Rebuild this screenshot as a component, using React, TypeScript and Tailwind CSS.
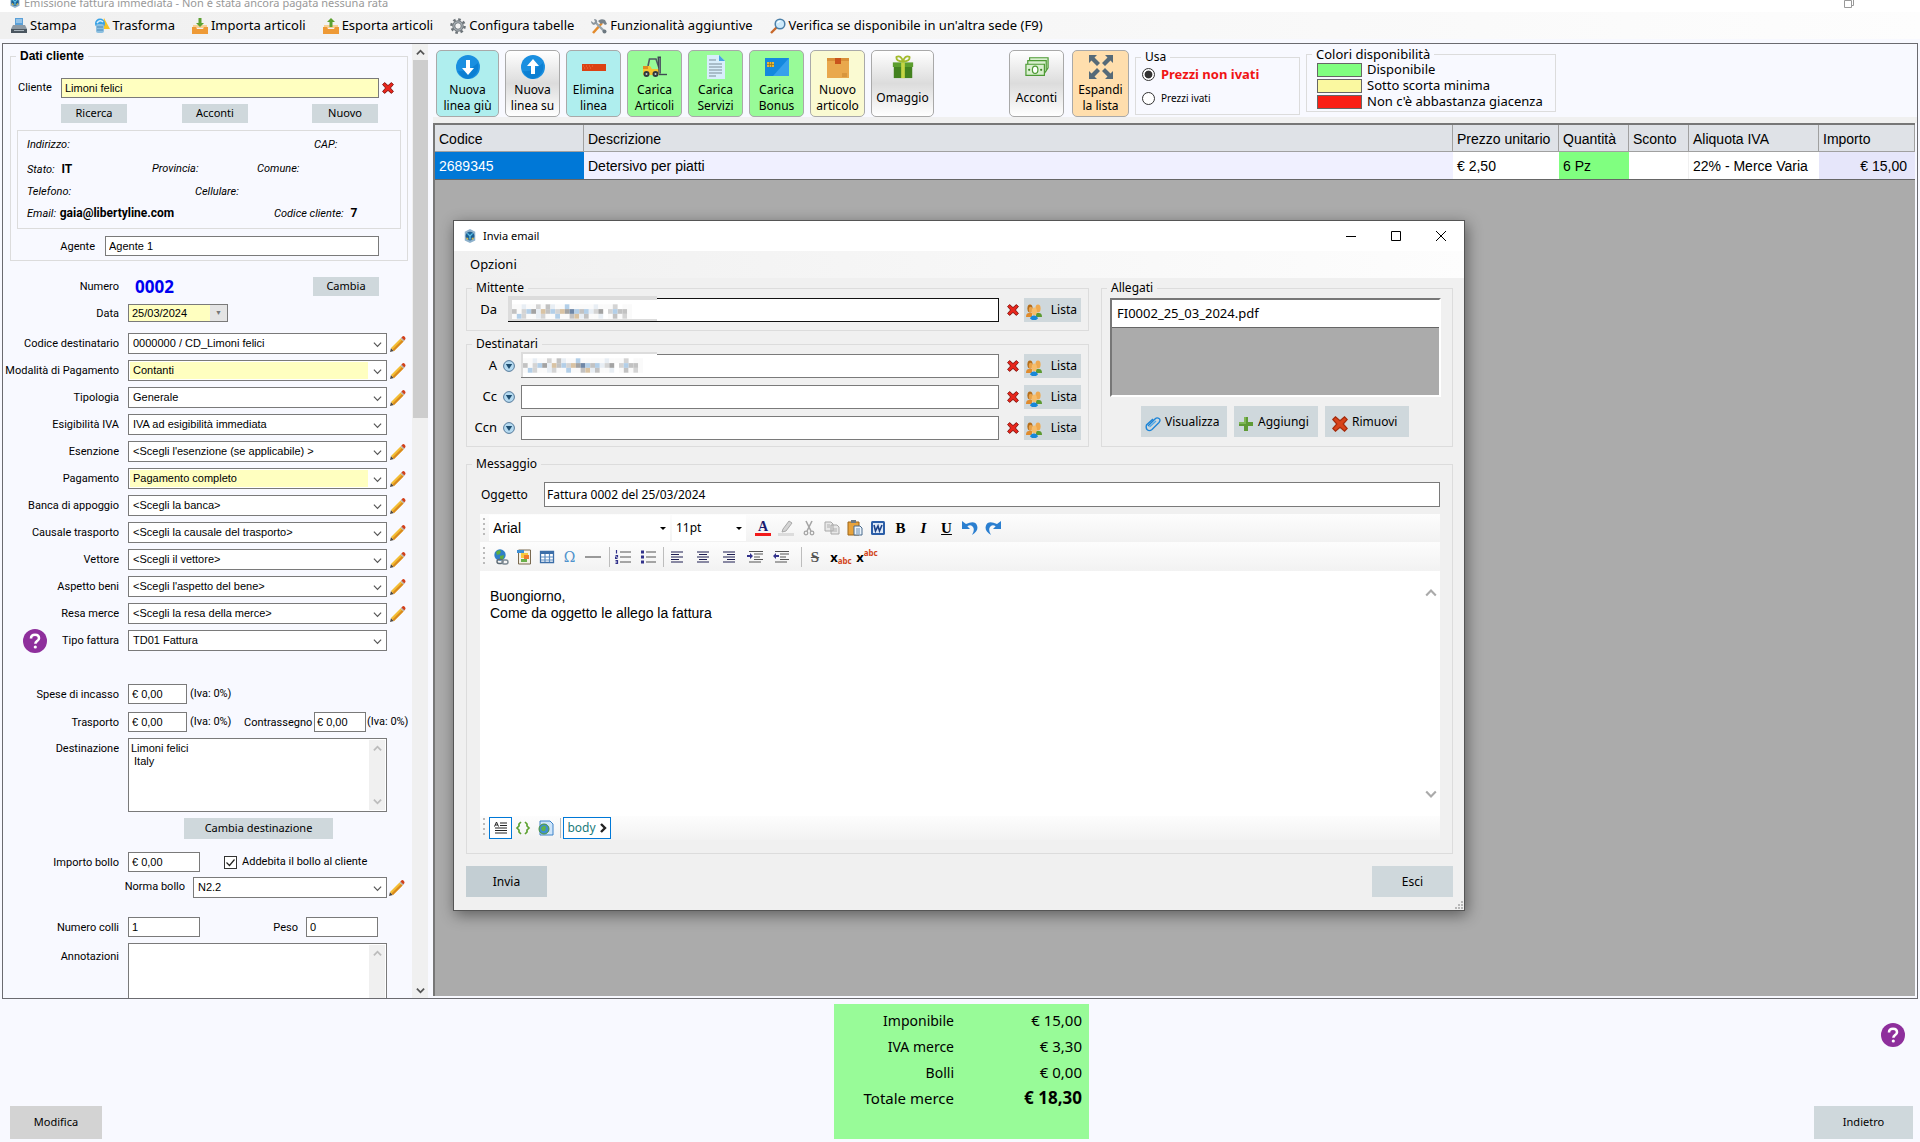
import { useState } from 'react';
import type { ReactNode } from 'react';

type IconProps = { className?: string };

const CAMPO = 'border border-[#7a7a7a] bg-white px-[3px] outline-none';
const TESTO_CAMPO = "font-['Liberation_Sans',sans-serif] text-[11px]";
const BOTTONE = "bg-[#cfd8dc] text-black font-['Noto_Sans',sans-serif]";

/* ---------- icone ---------- */

function IconaLogo({ className = 'w-4 h-4' }: IconProps) {
    return (
        <svg viewBox="0 0 16 16" className={className}>
            <path d="M8 0l6 3v10l-6 3-6-3V3z" fill="#8fb2cc" />
            <circle cx="8" cy="8" r="5" fill="#1d5f93" />
            <path d="M5 5l3 3 3-3M8 8v4" stroke="#5cc3e8" strokeWidth="1.5" fill="none" />
            <path d="M4 10l2 2M12 10l-2 2" stroke="#d8b94a" strokeWidth="1.5" />
        </svg>
    );
}

function IconaX({ className = 'w-3 h-3', colore = '#e8261c', bordo = '#7d100a' }: IconProps & { colore?: string; bordo?: string }) {
    return (
        <svg viewBox="0 0 12 12" className={className}>
            <path d="M.6 2.6 2.6.6 6 3.6 9.4.6l2 2L8.4 6l3 3.4-2 2L6 8.4l-3.4 3-2-2L3.6 6z" fill={colore} stroke={bordo} strokeWidth=".9" />
        </svg>
    );
}

function IconaMatita() {
    return (
        <svg viewBox="0 0 16 16" className="w-4 h-4 shrink-0">
            <path d="M0 16l1-4 3 3z" fill="#4f4a46" />
            <path d="M1 12 10.5 2.5l3 3L4 15z" fill="#f3bd33" />
            <path d="M2.5 13.5 12 4l1.5 1.5L4 15z" fill="#d98a1e" />
            <path d="m10.5 2.5 1.5-1.5 3 3-1.5 1.5z" fill="#b9b2a8" />
            <path d="m11.5 1.5 1.2-1.2q1-.6 2 .4t.8 2.4L14.3 4.3z" fill="#d2401a" />
        </svg>
    );
}

function IconaAiuto() {
    return (
        <svg viewBox="0 0 24 24" className="w-6 h-6">
            <circle cx="12" cy="12" r="12" fill="#8e2f9c" />
            <path d="M8 9.5Q8 5.8 12 5.8t4 3.5q0 1.7-2 2.9-1.6 1-1.6 2.6" stroke="#fff" strokeWidth="2.6" fill="none" />
            <circle cx="12.3" cy="18" r="1.6" fill="#fff" />
        </svg>
    );
}

function Freccia({ su = false, className = 'w-[9px] h-[9px] text-[#555]', spessore = 1.3 }: IconProps & { su?: boolean; spessore?: number }) {
    return (
        <svg viewBox="0 0 10 10" className={className}>
            <path d={su ? 'M1 7l4-4 4 4' : 'M1 3l4 4 4-4'} stroke="currentColor" strokeWidth={spessore} fill="none" />
        </svg>
    );
}

function IconaPersone() {
    return (
        <svg viewBox="0 0 16 16" className="mt-1 w-4 h-4 shrink-0">
            <path d="M0 13q0-4 3-4h3v4z" fill="#e08b2c" />
            <path d="M10 13h6q0-4-3-4h-3z" fill="#5c9a31" />
            <ellipse cx="4" cy="4.5" rx="2.6" ry="4" fill="#b66d18" />
            <ellipse cx="4.6" cy="5.8" rx="1.8" ry="3" fill="#e9a24a" />
            <ellipse cx="12" cy="4.5" rx="2.6" ry="4" fill="#efa94f" />
            <ellipse cx="8.3" cy="7.5" rx="2.6" ry="4" fill="#f6bd6c" />
            <path d="M4 14.5q1-3 4-3t4 3l-2 1.500H6z" fill="#1787d8" />
        </svg>
    );
}

function IconaStampante() {
    return (
        <svg viewBox="0 0 16 16" className="w-4 h-4">
            <path d="M4 0h8v7H4z" fill="#5aa0d8" />
            <path d="M5 2h6M5 4h6" stroke="#cfe5f5" />
            <path d="M2 7h12l2 4H0z" fill="#8d99a3" />
            <path d="M0 11h16v4H0z" fill="#4b565f" />
            <path d="M3 12.5h10" stroke="#a9b4bc" />
        </svg>
    );
}

function IconaTrasforma() {
    return (
        <svg viewBox="0 0 16 16" className="w-4 h-4">
            <path d="M10 0l6 11H8z" fill="#f7c325" />
            <circle cx="6" cy="5.5" r="5" fill="#3aa3e6" />
            <path d="M3 5q3-4 6-1" stroke="#d6f0ff" strokeWidth="1.5" fill="none" />
            <rect x="2" y="6" width="8" height="9" rx="2" fill="#8bbfe0" />
            <path d="M3 9h6M3 12h6" stroke="#4b88b8" />
        </svg>
    );
}

function IconaCassetto({ su = false }: { su?: boolean }) {
    return (
        <svg viewBox="0 0 16 16" className="w-4 h-4">
            <path d="M1 7h14v3H1z" fill="#f7cf95" />
            <path d="M0 9h4l1 2h6l1-2h4v7H0z" fill="#ee9a36" />
            <path d={su ? 'M8 0l4 4H9.5v5h-3V4H4z' : 'M8 9L4 5h2.5V0h3v5H12z'} fill="#5da130" />
        </svg>
    );
}

function IconaIngranaggio() {
    return (
        <svg viewBox="0 0 16 16" className="w-4 h-4">
            <circle cx="8" cy="8" r="6.6" fill="none" stroke="#6b7277" strokeWidth="2.4" strokeDasharray="2.6 2.58" />
            <circle cx="8" cy="8" r="4.2" fill="none" stroke="#6b7277" strokeWidth="3" />
            <circle cx="8" cy="8" r="4.2" fill="none" stroke="#a8b0b5" strokeWidth="1.2" />
        </svg>
    );
}

function IconaAttrezzi() {
    return (
        <svg viewBox="0 0 16 16" className="w-4 h-4">
            <path d="M2 15 11 5" stroke="#e38b2c" strokeWidth="2.6" />
            <path d="M7 3q3-3 7-1l2 4-2 1-2-2-2 1z" fill="#77828a" />
            <path d="M4 4l10 10" stroke="#9aa5ad" strokeWidth="2.4" />
            <path d="M0 3l3 2 1-1L3 1q4 0 3 4L3 7Q0 6 0 3z" fill="#8a959d" />
            <circle cx="13.5" cy="13.5" r="2" fill="#6d7880" />
        </svg>
    );
}

function IconaLente() {
    return (
        <svg viewBox="0 0 16 16" className="w-4 h-4">
            <path d="M1 15l6-6" stroke="#c8682a" strokeWidth="2.4" />
            <circle cx="10" cy="6" r="4.8" fill="#cdeafb" stroke="#4b7fa8" strokeWidth="1.5" />
            <path d="M7.5 5q1-2 3-2" stroke="#fff" strokeWidth="1.2" fill="none" />
        </svg>
    );
}

function IconaCerchioFreccia({ su = false }: { su?: boolean }) {
    return (
        <svg viewBox="0 0 24 24" className="w-6 h-6">
            <circle cx="12" cy="12" r="12" fill="#1a8fe0" />
            <path d="M2 16Q10 18 22 8q2 12-10 16Q5 23 2 16z" fill="#0c7fd2" />
            <path d={su ? 'M12 4l6 7h-4v8h-4v-8H6z' : 'M12 20l-6-7h4V5h4v8h4z'} fill="#fff" />
        </svg>
    );
}

function IconaMeno() {
    return (
        <svg viewBox="0 0 24 24" className="w-6 h-6">
            <path d="M0 9h24v7H0z" fill="#dc4214" />
            <path d="M1 11h11M2 13h7" stroke="#ef7040" strokeDasharray="1 2" />
        </svg>
    );
}

function IconaMuletto() {
    return (
        <svg viewBox="0 0 24 24" className="w-6 h-6">
            <path d="M5 11 6.500 4H13l3 9" stroke="#4e5a62" strokeWidth="1.6" fill="none" />
            <path d="M0 11h7l2 3h7v6H0z" fill="#f6c531" />
            <path d="M0 11h5v3H0z" fill="#e08d1e" />
            <path d="M14.500 1.500H18v17h-2.500z" fill="#3f4a52" />
            <path d="M16.800 3v15" stroke="#8e9aa2" strokeWidth=".8" />
            <path d="M16 19.500h8" stroke="#3f4a52" strokeWidth="1.4" />
            <circle cx="3.5" cy="19" r="3" fill="#30383e" />
            <circle cx="12.5" cy="19" r="3" fill="#30383e" />
            <circle cx="3.5" cy="19" r="1" fill="#c4cdd3" />
            <circle cx="12.5" cy="19" r="1" fill="#c4cdd3" />
        </svg>
    );
}

function IconaDocumento() {
    return (
        <svg viewBox="0 0 24 24" className="w-6 h-6">
            <path d="M3 0h12l6 6v18H3z" fill="#d8eefb" />
            <path d="M15 0l6 6h-6z" fill="#4ba3e0" />
            <path d="M5 5h7M5 9h13M5 12h13M5 15h13M5 18h13M5 21h7" stroke="#7b8b97" strokeWidth="1.2" />
        </svg>
    );
}

function IconaCarta() {
    return (
        <svg viewBox="0 0 24 24" className="w-6 h-6">
            <path d="M0 3h24v18H0z" fill="#1488de" />
            <path d="M24 3v18H8z" fill="#37a0ec" />
            <path d="M2 7h7v5H2z" fill="#e3b63a" />
            <path d="M4.5 7v5M6.5 7v5M2 9.5h7" stroke="#94731b" strokeWidth=".7" />
        </svg>
    );
}

function IconaScatola() {
    return (
        <svg viewBox="0 0 24 24" className="w-6 h-6">
            <path d="M1 3h22v20H1z" fill="#e9a84c" />
            <path d="M1 3h22v3H1z" fill="#d99038" />
            <path d="M9 3h6v6H9z" fill="#c9531c" />
            <path d="M16 19h5M16 21h5" stroke="#bd7b28" strokeWidth=".8" />
        </svg>
    );
}

function IconaRegalo() {
    return (
        <svg viewBox="0 0 24 26" className="w-6 h-6">
            <path d="M12 7Q4 7 5 2q5-2 7 5 2-7 7-5 1 5-7 5z" fill="none" stroke="#a3bb2c" strokeWidth="2" />
            <path d="M1 8h22v5H1z" fill="#5c9e2e" />
            <path d="M2 13h20v12H2z" fill="#43821f" />
            <path d="M10 8h4v17h-4z" fill="#c4d544" />
        </svg>
    );
}

function IconaSoldi() {
    return (
        <svg viewBox="0 0 26 24" className="w-6 h-6">
            <g fill="#d9efcf" stroke="#4d9a34" strokeWidth="1.3">
                <path d="M5 2h20v11l-2 3H5z" />
                <path d="M3 5h20v11l-2 3H3z" />
                <path d="M1 9h20v12H1z" />
                <ellipse cx="11" cy="15" rx="3" ry="4" fill="#fff" />
            </g>
            <circle cx="4.5" cy="15" r="1.2" fill="#3f8628" />
            <circle cx="17.5" cy="15" r="1.2" fill="#3f8628" />
        </svg>
    );
}

function IconaEspandi() {
    return (
        <svg viewBox="0 0 24 24" className="w-6 h-6">
            <g fill="#566a78">
                <path d="M0 0h8L5.5 2.5 11 8l-3 3-5.5-5.500L0 8z" />
                <path d="M24 0v8l-2.5-2.500L16 11l-3-3 5.500-5.500L16 0z" />
                <path d="M0 24v-8l2.500 2.500L8 13l3 3-5.500 5.500L8 24z" />
                <path d="M24 24h-8l2.500-2.500L13 16l3-3 5.500 5.500L24 16z" />
            </g>
        </svg>
    );
}

function IconaGraffetta() {
    return (
        <svg viewBox="0 0 16 16" className="mt-1 w-4 h-4 shrink-0">
            <path d="M3 10l7-7q2-2 4-.5t0 4L7 13.5q-2.500 2-4.500.5T1.500 9L8 3" stroke="#1d84d6" strokeWidth="1.4" fill="none" />
            <path d="M4.5 11 11 5" stroke="#4aa8ea" strokeWidth="1.2" />
        </svg>
    );
}

function IconaPiu() {
    return (
        <svg viewBox="0 0 16 16" className="mt-1 w-4 h-4 shrink-0">
            <path d="M6 1h4v5h5v4h-5v5H6v-5H1V6h5z" fill="#5f9a34" />
            <path d="M6 1h2v7H1V6h5z" fill="#7fb755" />
        </svg>
    );
}

function IconaTendina() {
    return (
        <svg viewBox="0 0 12 12" className="w-3 h-3">
            <circle cx="6" cy="6" r="5.4" fill="#b5daf0" stroke="#54799a" />
            <path d="M2.8 4h6.4L6 9z" fill="#1f4e70" />
        </svg>
    );
}

function SvgBarra({ children }: { children: ReactNode }) {
    return <svg viewBox="0 0 16 16" className="w-4 h-4">{children}</svg>;
}

const righe = (d: string, colore = '#1c1c50') => <path d={d} stroke={colore} strokeWidth="1.2" fill="none" />;

const ICONE_TESTO: { nome: string; icona: ReactNode }[] = [
    { nome: 'Colore testo', icona: <SvgBarra><text x="8" y="11" textAnchor="middle" fontSize="14" fontWeight="700" fontFamily="Liberation Serif" fill="#1c1c70">A</text><path d="M0 13h16v3H0z" fill="#f21a1a" /></SvgBarra> },
    { nome: 'Evidenziatore', icona: <SvgBarra><path d="M5 9l6-8 3 2-6 8-4 1z" fill="#d4d4d4" stroke="#a8a8a8" /><path d="M0 13h16v3H0z" fill="#dcdcdc" /></SvgBarra> },
    { nome: 'Taglia', icona: <SvgBarra><path d="M5 1l5 10M11 1L6 11" stroke="#a5a5a5" strokeWidth="1.6" /><circle cx="5" cy="13" r="1.8" fill="none" stroke="#a5a5a5" strokeWidth="1.3" /><circle cx="11" cy="13" r="1.8" fill="none" stroke="#a5a5a5" strokeWidth="1.3" /></SvgBarra> },
    { nome: 'Copia', icona: <SvgBarra><path d="M1 2h6l2 2v7H1zM7 5h6l2 2v7H7z" fill="#e8e8e8" stroke="#a8a8a8" />{righe('M3 5h3M3 7h3M9 9h4M9 11h4', '#b0b0b0')}</SvgBarra> },
    { nome: 'Incolla', icona: <SvgBarra><path d="M1 2h11v13H1z" fill="#e8a33c" stroke="#9c6517" /><path d="M4 0h5v3H4z" fill="#6f7a82" /><path d="M7 6h6l2 2v7H7z" fill="#eaf3fb" stroke="#4a6a8c" />{righe('M9 9h4M9 11h4M9 13h4', '#6d8fb3')}</SvgBarra> },
    { nome: 'Incolla da Word', icona: <SvgBarra><rect x="1" y="1" width="14" height="14" rx="1.5" fill="#2b5ea8" /><path d="M3 3h10v10H3z" fill="#dfeaf8" /><path d="M4 5l1.500 6L8 6l1.500 5L12 5" stroke="#1c4288" strokeWidth="1.6" fill="none" /></SvgBarra> },
    { nome: 'Grassetto', icona: <span className="font-['Liberation_Serif',serif] text-[15px] leading-4 font-bold">B</span> },
    { nome: 'Corsivo', icona: <span className="font-['Liberation_Serif',serif] text-[15px] leading-4 font-bold italic">I</span> },
    { nome: 'Sottolineato', icona: <span className="font-['Liberation_Serif',serif] text-[15px] leading-4 font-bold underline">U</span> },
    { nome: 'Annulla', icona: <SvgBarra><path d="M0 1v8h8L5.3 6.3Q9 4 11 7t-1 8q7-4 5-9.500T4 4z" fill="#2b7fd0" /></SvgBarra> },
    { nome: 'Ripristina', icona: <SvgBarra><path d="M16 1v8H8l2.700-2.700Q7 4 5 7t1 8q-7-4-5-9.500T12 4z" fill="#2b7fd0" /></SvgBarra> },
];

const ICONE_INSERISCI: { nome: string; icona: ReactNode }[] = [
    { nome: 'Collegamento', icona: <SvgBarra><circle cx="7" cy="6" r="5.7" fill="#2f7fc8" /><path d="M3 3q3-3 5-1l-1 3-3 1zM7 7l4-1-1 5H7z" fill="#5fae3f" /><rect x="4" y="10.5" width="6" height="4" rx="2" fill="none" stroke="#5d6a74" strokeWidth="1.4" /><rect x="9" y="11" width="6" height="4" rx="2" fill="none" stroke="#7c8992" strokeWidth="1.4" /></SvgBarra> },
    { nome: 'Immagine', icona: <SvgBarra><path d="M2.5 1h12v14h-12z" fill="#f4f0e4" stroke="#7a6a50" /><path d="M5 4h7v5H5z" fill="#f7c93e" /><path d="M8 6h5v4H8z" fill="#ef7b2d" /><path d="M5 10h6v3H5z" fill="#6ab04a" /><path d="M1 1h7v3H1z" fill="#3e8fd4" /></SvgBarra> },
    { nome: 'Tabella', icona: <SvgBarra><path d="M1.5 2.5h13v11h-13z" fill="#fff" stroke="#3b6ea8" strokeWidth="1.3" /><path d="M1 2h14v3H1z" fill="#3b6ea8" />{righe('M6 5v8M10.5 5v8M2 8h12M2 11h12', '#5a8cc2')}</SvgBarra> },
    { nome: 'Simbolo', icona: <span className="font-['DejaVu_Serif',serif] text-[14px] leading-4 text-[#4f92cc]">Ω</span> },
    { nome: 'Linea orizzontale', icona: <SvgBarra>{righe('M0 8h16', '#5a5a5a')}</SvgBarra> },
];

const ICONE_ELENCHI: { nome: string; icona: ReactNode }[] = [
    { nome: 'Elenco numerato', icona: <SvgBarra>{righe('M5 3h11M5 8h11M5 13h11', '#555')}{righe('M1.5 1v3.5M.5 6.500h2v1.500h-2v1.500h2M.5 11.500h2v3h-2M.5 13h2', '#33338c')}</SvgBarra> },
    { nome: 'Elenco puntato', icona: <SvgBarra>{righe('M6 3h10M6 8h10M6 13h10', '#555')}<path d="M1 1.500h3v3H1zM1 6.500h3v3H1zM1 11.500h3v3H1z" fill="#33338c" /></SvgBarra> },
];

const ICONE_PARAGRAFO: { nome: string; icona: ReactNode }[] = [
    { nome: 'Allinea a sinistra', icona: <SvgBarra>{righe('M2 3h12M2 5.500h8M2 8h12M2 10.500h8M2 13h12')}</SvgBarra> },
    { nome: 'Centra', icona: <SvgBarra>{righe('M2 3h12M4 5.500h8M2 8h12M4 10.500h8M2 13h12')}</SvgBarra> },
    { nome: 'Allinea a destra', icona: <SvgBarra>{righe('M2 3h12M6 5.500h8M2 8h12M6 10.500h8M2 13h12')}</SvgBarra> },
    { nome: 'Aumenta rientro', icona: <SvgBarra>{righe('M2 2.500h14M7 5h9M7 8h6M7 10.500h9M2 13h12', '#555')}<path d="M0 6h3V4l3 3-3 3V8H0z" fill="#33338c" /></SvgBarra> },
    { nome: 'Riduci rientro', icona: <SvgBarra>{righe('M2 2.500h14M7 5h9M7 8h6M7 10.500h9M2 13h12', '#555')}<path d="M6 6H3V4L0 7l3 3V8h3z" fill="#33338c" /></SvgBarra> },
];

const ICONE_CARATTERE: { nome: string; icona: ReactNode }[] = [
    { nome: 'Barrato', icona: <span className="font-['Liberation_Serif',serif] text-[15px] leading-4 font-bold line-through text-[#555]">S</span> },
    { nome: 'Pedice', icona: <span className="flex items-end leading-none font-bold"><span className="text-[13px] leading-4">x</span><span className="text-[8px] text-[#d2441a]">abc</span></span> },
    { nome: 'Apice', icona: <span className="flex items-start leading-none font-bold"><span className="text-[13px] leading-4">x</span><span className="text-[8px] text-[#d2441a]">abc</span></span> },
];

/* ---------- controlli ---------- */

function Gruppo({ titolo, className = '', titoloClass = '', children }: { titolo: string; className?: string; titoloClass?: string; children: ReactNode }) {
    return (
        <fieldset className={`min-w-0 border border-[#dcdcdc] ${className}`}>
            <legend className={`ml-[5px] px-1 leading-4 ${titoloClass}`}>{titolo}</legend>
            {children}
        </fieldset>
    );
}

function Tendina({ id, valore, giallo = false, className = '' }: { id: string; valore: string; giallo?: boolean; className?: string }) {
    return (
        <div className={`relative h-[21px] border border-[#7a7a7a] bg-white p-px ${className}`}>
            <select id={id} defaultValue={valore}
                className={`block h-full appearance-none pl-[3px] pb-[2px] outline-none ${TESTO_CAMPO} ${giallo ? 'w-[calc(100%-17px)] bg-[#ffffc0]' : 'w-full bg-white'}`}
            >
                <option>{valore}</option>
            </select>
            <Freccia className="pointer-events-none absolute right-1 top-[6px] w-[9px] h-[9px] text-[#555]" />
        </div>
    );
}

const TENDINE = [
    { id: 'codice', label: 'Codice destinatario', valore: '0000000 / CD_Limoni felici', matita: true },
    { id: 'modalita', label: 'Modalità di Pagamento', valore: 'Contanti', matita: true, giallo: true },
    { id: 'tipologia', label: 'Tipologia', valore: 'Generale', matita: true },
    { id: 'esigibilita', label: 'Esigibilità IVA', valore: 'IVA ad esigibilità immediata', matita: false },
    { id: 'esenzione', label: 'Esenzione', valore: "<Scegli l'esenzione (se applicabile) >", matita: true },
    { id: 'pagamento', label: 'Pagamento', valore: 'Pagamento completo', matita: true, giallo: true },
    { id: 'banca', label: 'Banca di appoggio', valore: '<Scegli la banca>', matita: true },
    { id: 'causale', label: 'Causale trasporto', valore: '<Scegli la causale del trasporto>', matita: true },
    { id: 'vettore', label: 'Vettore', valore: '<Scegli il vettore>', matita: true },
    { id: 'aspetto', label: 'Aspetto beni', valore: "<Scegli l'aspetto del bene>", matita: true },
    { id: 'resa', label: 'Resa merce', valore: '<Scegli la resa della merce>', matita: true },
    { id: 'tipofattura', label: 'Tipo fattura', valore: 'TD01 Fattura', matita: false, aiuto: true },
];

function Etichetta({ per, children, className = 'w-[116px] pt-[2px]' }: { per?: string; children: ReactNode; className?: string }) {
    return <label htmlFor={per} className={`shrink-0 text-right whitespace-nowrap ${className}`}>{children}</label>;
}

function AreaTesto({ id, valore, className }: { id: string; valore: string; className: string }) {
    return (
        <div className={`flex w-[259px] border border-[#7a7a7a] bg-white p-px ${className}`}>
            <textarea id={id} defaultValue={valore} className={`flex-1 resize-none overflow-hidden px-px pt-[2px] leading-[13px] outline-none ${TESTO_CAMPO}`} />
            <div className="flex w-4 flex-col items-center justify-between bg-[#f0f0f0] py-1">
                <Freccia su spessore={2} className="w-[9px] h-[9px] text-[#bcbcbc]" />
                <Freccia spessore={2} className="w-[9px] h-[9px] text-[#bcbcbc]" />
            </div>
        </div>
    );
}

/* ---------- pannello cliente ---------- */

function PannelloCliente() {
    return (
        <div className="flex w-[430px] shrink-0 overflow-hidden">
            <div className="flex min-w-0 flex-1 flex-col overflow-hidden pt-1 font-['Roboto',sans-serif] text-[11px]">
                <Gruppo titolo="Dati cliente" className="mr-1 ml-[7px] h-[213px] shrink-0" titoloClass="font-bold text-[12px] font-['Liberation_Sans',sans-serif]">
                    <div className="mt-[14px] flex items-center pl-[7px]">
                        <Etichetta per="cliente" className="w-[43px] text-left!">Cliente</Etichetta>
                        <input id="cliente" defaultValue="Limoni felici" className={`h-5 w-[318px] border border-[#7a7a7a] bg-[#ffffc0] px-[3px] outline-none ${TESTO_CAMPO}`} />
                        <button aria-label="Rimuovi cliente" className="ml-[3px]"><IconaX /></button>
                    </div>
                    <div className="mt-[6px] ml-[50px] flex">
                        <button className={`h-[19px] w-[66px] ${BOTTONE}`}>Ricerca</button>
                        <button className={`ml-[55px] h-[19px] w-[66px] ${BOTTONE}`}>Acconti</button>
                        <button className={`ml-16 h-[19px] w-[66px] ${BOTTONE}`}>Nuovo</button>
                    </div>
                    <div className="mx-[6px] mt-[7px] h-[99px] border border-[#dcdcdc] pl-[9px] pt-[2px] italic">
                        <div className="flex h-6 items-center"><span className="w-[287px]">Indirizzo:</span><span>CAP:</span></div>
                        <div className="flex h-6 items-center">
                            <span className="w-[125px]">Stato: <b className="ml-1 text-[12px] not-italic">IT</b></span>
                            <span className="w-[105px]">Provincia:</span>
                            <span>Comune:</span>
                        </div>
                        <div className="flex h-[22px] items-center"><span className="w-[168px]">Telefono:</span><span>Cellulare:</span></div>
                        <div className="flex h-5 items-center">
                            <span className="w-[247px]">Email: <b className="ml-px text-[12px] not-italic">gaia@libertyline.com</b></span>
                            <span>Codice cliente: <b className="ml-1 text-[12px] not-italic">7</b></span>
                        </div>
                    </div>
                    <div className="mt-[7px] flex items-center">
                        <Etichetta per="agente" className="w-[84px] pt-[3px]">Agente</Etichetta>
                        <input id="agente" defaultValue="Agente 1" className={`ml-[10px] h-5 w-[274px] ${CAMPO} ${TESTO_CAMPO}`} />
                    </div>
                </Gruppo>

                <div className="mt-4 flex h-[19px] shrink-0 items-center">
                    <Etichetta>Numero</Etichetta>
                    <b className="ml-4 flex-1 font-['Noto_Sans',sans-serif] text-[17px] text-[#0000f0]">0002</b>
                    <button className={`mr-[33px] h-[19px] w-[66px] ${BOTTONE}`}>Cambia</button>
                </div>
                <div className="mt-2 flex h-[18px] shrink-0 items-center">
                    <Etichetta per="data">Data</Etichetta>
                    <div className="ml-[9px] flex h-[18px] w-[100px] border border-[#7a7a7a]">
                        <input id="data" defaultValue="25/03/2024" className={`w-[81px] bg-[#ffffc0] px-[3px] outline-none ${TESTO_CAMPO}`} />
                        <button aria-label="Apri calendario" className="flex flex-1 items-center justify-center bg-[#e4e4e4] text-[7px] text-[#777]">▼</button>
                    </div>
                </div>

                <div className="mt-[11px] flex shrink-0 flex-col gap-[6px]">
                    {TENDINE.map((t) => (
                        <div key={t.id} className="flex h-[21px] items-center">
                            {t.aiuto && <button aria-label="Aiuto" className="ml-[20px] h-6 w-6"><IconaAiuto /></button>}
                            <Etichetta per={t.id} className={t.aiuto ? 'w-[72px] pt-[2px]' : 'w-[116px] pt-[2px]'}>{t.label}</Etichetta>
                            <Tendina id={t.id} valore={t.valore} giallo={t.giallo} className="ml-[9px] w-[259px] shrink-0" />
                            {t.matita && <button aria-label={`Modifica ${t.label}`} className="ml-[3px]"><IconaMatita /></button>}
                        </div>
                    ))}
                </div>

                <div className="mt-[33px] flex h-5 shrink-0 items-center">
                    <Etichetta per="spese">Spese di incasso</Etichetta>
                    <input id="spese" defaultValue="€ 0,00" className={`ml-[9px] h-5 w-[59px] ${CAMPO} ${TESTO_CAMPO}`} />
                    <span className="ml-[3px]">(Iva: 0%)</span>
                </div>
                <div className="mt-2 flex h-5 shrink-0 items-center">
                    <Etichetta per="trasporto">Trasporto</Etichetta>
                    <input id="trasporto" defaultValue="€ 0,00" className={`ml-[9px] h-5 w-[59px] ${CAMPO} ${TESTO_CAMPO}`} />
                    <span className="ml-[3px]">(Iva: 0%)</span>
                    <Etichetta per="contrassegno" className="ml-auto w-[68px] pt-[2px]">Contrassegno</Etichetta>
                    <input id="contrassegno" defaultValue="€ 0,00" className={`ml-[2px] h-5 w-[52px] px-[2px]! ${CAMPO} ${TESTO_CAMPO}`} />
                    <span className="mr-1 ml-px w-[41px] whitespace-nowrap">(Iva: 0%)</span>
                </div>
                <div className="mt-[6px] flex h-[74px] shrink-0">
                    <Etichetta per="destinazione" className="w-[116px] pt-[3px]">Destinazione</Etichetta>
                    <AreaTesto id="destinazione" valore={'Limoni felici\n Italy'} className="ml-[9px]" />
                </div>
                <button className={`mt-[6px] ml-[181px] h-[21px] w-[149px] shrink-0 ${BOTTONE}`}>Cambia destinazione</button>
                <div className="mt-[13px] flex h-5 shrink-0 items-center">
                    <Etichetta per="bollo">Importo bollo</Etichetta>
                    <input id="bollo" defaultValue="€ 0,00" className={`ml-[9px] h-5 w-[72px] ${CAMPO} ${TESTO_CAMPO}`} />
                    <label className="ml-6 flex items-center gap-[5px]">
                        <span className="relative flex">
                            <input type="checkbox" defaultChecked className="peer h-[13px] w-[13px] appearance-none border border-[#333] bg-white" />
                            <svg viewBox="0 0 13 13" className="pointer-events-none absolute h-[13px] w-[13px] opacity-0 peer-checked:opacity-100">
                                <path d="M2.5 6.500l3 3 5-6" stroke="#222" strokeWidth="1.2" fill="none" />
                            </svg>
                        </span>
                        Addebita il bollo al cliente
                    </label>
                </div>
                <div className="mt-[5px] flex h-[21px] shrink-0 items-center">
                    <Etichetta per="norma" className="w-[182px]">Norma bollo</Etichetta>
                    <Tendina id="norma" valore="N2.2" className="ml-2 w-[194px] shrink-0" />
                    <button aria-label="Modifica norma bollo" className="ml-[2px]"><IconaMatita /></button>
                </div>
                <div className="mt-[19px] flex h-5 shrink-0 items-center">
                    <Etichetta per="colli">Numero colli</Etichetta>
                    <input id="colli" defaultValue="1" className={`ml-[9px] h-5 w-[72px] ${CAMPO} ${TESTO_CAMPO}`} />
                    <Etichetta per="peso" className="w-[98px] pt-[2px]">Peso</Etichetta>
                    <input id="peso" defaultValue="0" className={`ml-2 h-5 w-[72px] ${CAMPO} ${TESTO_CAMPO}`} />
                </div>
                <div className="mt-[6px] flex min-h-0 flex-1">
                    <Etichetta per="annotazioni" className="w-[116px] pt-[6px]">Annotazioni</Etichetta>
                    <AreaTesto id="annotazioni" valore="" className="ml-[9px] h-[90px]" />
                </div>
            </div>
            <div className="mr-[5px] flex w-4 flex-col items-center bg-[#f0f0f0]">
                <div className="flex h-4 items-center"><Freccia su spessore={2} /></div>
                <div className="h-[358px] w-[15px] bg-[#cdcdcd]" />
                <div className="mt-auto flex h-4 items-center"><Freccia spessore={2} /></div>
            </div>
        </div>
    );
}

/* ---------- barra articoli ---------- */

const CIANO = 'bg-[#afeeee]';
const VERDE = 'bg-[#98fb98]';
const GRIGIO = 'bg-linear-to-b from-white via-[#dcdcdc] to-white';

const PULSANTI = [
    { testo: 'Nuova linea giù', icona: <IconaCerchioFreccia />, stile: `w-[63px] ${CIANO}` },
    { testo: 'Nuova linea su', icona: <IconaCerchioFreccia su />, stile: `w-[55px] ${GRIGIO}` },
    { testo: 'Elimina linea', icona: <IconaMeno />, stile: `w-[55px] ${CIANO}` },
    { testo: 'Carica Articoli', icona: <IconaMuletto />, stile: `w-[55px] ${VERDE}` },
    { testo: 'Carica Servizi', icona: <IconaDocumento />, stile: `w-[55px] ${VERDE}` },
    { testo: 'Carica Bonus', icona: <IconaCarta />, stile: `w-[55px] ${VERDE}` },
    { testo: 'Nuovo articolo', icona: <IconaScatola />, stile: 'w-[55px] bg-[#fafad2]' },
    { testo: 'Omaggio', icona: <IconaRegalo />, stile: `w-[63px] ${GRIGIO}` },
];

function PulsanteGrande({ testo, icona, stile }: { testo: string; icona: ReactNode; stile: string }) {
    return (
        <button className={`flex h-[67px] shrink-0 flex-col items-center rounded-[5px] border border-[#a9a9a9] pt-1 text-[12px] leading-4 ${stile}`}>
            {icona}
            <span className="flex flex-1 items-center">{testo}</span>
        </button>
    );
}

const LEGENDA = [
    { testo: 'Disponibile', colore: 'bg-[#80ff80]' },
    { testo: 'Sotto scorta minima', colore: 'bg-[#faf8a0]' },
    { testo: "Non c'è abbastanza giacenza", colore: 'bg-[#fa1e14]' },
];

function BarraArticoli() {
    const [ivati, setIvati] = useState(false);
    const radio = 'h-[13px] w-[13px] shrink-0 appearance-none rounded-full border border-[#333] bg-white checked:bg-[radial-gradient(#333_45%,white_55%)]';

    return (
        <div className="flex h-[73px] items-start bg-[#f8f9ff] pt-[2px] pl-[3px] font-['Noto_Sans',sans-serif]">
            <div className="mt-1 flex gap-[6px]">
                {PULSANTI.map((p) => <PulsanteGrande key={p.testo} {...p} />)}
            </div>
            <div className="mt-1 ml-[75px] flex gap-2">
                <PulsanteGrande testo="Acconti" icona={<IconaSoldi />} stile={`w-[55px] ${GRIGIO}`} />
                <PulsanteGrande testo="Espandi la lista" icona={<IconaEspandi />} stile="w-[57px] bg-[#ffdead]" />
            </div>
            <Gruppo titolo="Usa" className="mt-[3px] ml-[6px] h-[66px] w-[165px]" titoloClass="text-[12px]">
                <label className="flex h-[19px] items-center gap-[6px] pl-[6px] text-[13px] font-bold text-[#f01414]">
                    <input type="radio" name="usa" checked={!ivati} onChange={() => setIvati(false)} className={radio} />
                    Prezzi non ivati
                </label>
                <label className="mt-[6px] flex h-[17px] items-center gap-[6px] pl-[6px] text-[10px]">
                    <input type="radio" name="usa" checked={ivati} onChange={() => setIvati(true)} className={radio} />
                    Prezzi ivati
                </label>
            </Gruppo>
            <Gruppo titolo="Colori disponibilità" className="ml-[6px] h-[66px] w-[250px]" titoloClass="text-[13px]">
                {LEGENDA.map((l) => (
                    <div key={l.testo} className="flex h-4 items-center gap-[5px] pl-[10px] text-[13px]">
                        <span className={`h-[14px] w-[45px] border border-[#666] ${l.colore}`} />
                        {l.testo}
                    </div>
                ))}
            </Gruppo>
        </div>
    );
}

function TabellaArticoli() {
    const th = 'border-r border-b border-[#a0a0a0] px-1 pt-[2px] text-left font-normal';
    return (
        <table className="w-full table-fixed border-separate border-spacing-0 border-b border-b-[#666] font-['Liberation_Sans',sans-serif] text-[14px]">
            <colgroup>
                <col className="w-[149px]" />
                <col />
                <col className="w-[106px]" />
                <col className="w-[70px]" />
                <col className="w-[60px]" />
                <col className="w-[130px]" />
                <col className="w-[96px]" />
            </colgroup>
            <thead>
                <tr className="h-[27px] bg-[#dfe2e7] whitespace-nowrap">
                    {['Codice', 'Descrizione', 'Prezzo unitario', 'Quantità', 'Sconto', 'Aliquota IVA', 'Importo'].map((c) => (
                        <th key={c} className={th}>{c}</th>
                    ))}
                </tr>
            </thead>
            <tbody>
                <tr className="h-[27px] bg-white whitespace-nowrap">
                    <td className="bg-[#0078d7] px-1 pt-[2px] text-white">2689345</td>
                    <td className="bg-[#f0f0ff] px-1 pt-[2px]">Detersivo per piatti</td>
                    <td className="px-1 pt-[2px]">€ 2,50</td>
                    <td className="bg-[#80ff80] px-1 pt-[2px]">6 Pz</td>
                    <td className="border-r border-[#f0f0f0]" />
                    <td className="px-1 pt-[2px]">22% - Merce Varia</td>
                    <td className="bg-[#e6e6fa] px-2 pt-[2px] text-right">€ 15,00</td>
                </tr>
            </tbody>
        </table>
    );
}

/* ---------- finestra email ---------- */

const MOSAICO = [
    '0010020310040000010002 00',
    '3024615342567434126 24330',
    '0420012004003513001 03020',
];
const TINTE = ['#fafafa', '#e8eef4', '#d4d4d4', '#c2c2c2', '#b3cfe8', '#d9c3a3', '#a3a3a3', '#6f87a6'];

function Oscurato({ bordo }: { bordo: string }) {
    return (
        <div className={`pointer-events-none absolute -top-[2px] left-0 h-[25px] border-[#dcdcdc] bg-white ${bordo}`}>
            <svg viewBox="0 0 125 15" width="120" height="15" className="mt-1">
                {MOSAICO.map((riga, y) => riga.split('').map((c, x) => c !== ' ' && (
                    <rect key={`${x}-${y}`} x={x * 5} y={y * 5} width="5" height="5" fill={TINTE[Number(c)]} />
                )))}
            </svg>
        </div>
    );
}

function RigaIndirizzo({ id, label, menu = true, oscurato }: { id: string; label: string; menu?: boolean; oscurato?: string }) {
    return (
        <div className="flex h-6 items-center">
            <label htmlFor={id} className="w-[30px] text-right text-[13px]">{label}</label>
            {menu && <button aria-label={`Scegli ${label}`} className="ml-[6px]"><IconaTendina /></button>}
            <div className={`relative h-6 flex-1 ${menu ? 'ml-[6px]' : 'ml-[11px]'}`}>
                <input id={id} className={`h-6 w-full border bg-white px-1 outline-none ${menu ? 'border-[#7a7a7a]' : 'border-[#111]'}`} />
                {oscurato && <Oscurato bordo={oscurato} />}
            </div>
            <button aria-label={`Svuota ${label}`} className="ml-2"><IconaX /></button>
            <button className={`ml-[5px] mr-[7px] flex h-6 w-[57px] items-center justify-between pl-[2px] pr-1 text-[12px] ${BOTTONE}`}>
                <IconaPersone />
                Lista
            </button>
        </div>
    );
}

function Maniglia() {
    return <span className="mr-1 ml-[3px] h-5 w-[2px] shrink-0 bg-[repeating-linear-gradient(#bbb_0_2px,transparent_2px_5px)]" />;
}

function Separatore({ className = '' }: IconProps) {
    return <span className={`h-5 w-px shrink-0 bg-[#bdbdbd] ${className}`} />;
}

function Icone({ voci, passo }: { voci: { nome: string; icona: ReactNode }[]; passo: string }) {
    return (
        <>
            {voci.map((v) => (
                <button key={v.nome} aria-label={v.nome} title={v.nome} className={`flex h-5 shrink-0 items-center justify-center ${passo}`}>{v.icona}</button>
            ))}
        </>
    );
}

function SceltaBarra({ valore, nome, className }: { valore: string; nome: string; className: string }) {
    return (
        <div className={`relative h-[26px] bg-white ${className}`}>
            <select aria-label={nome} defaultValue={valore} className="h-full w-full appearance-none bg-transparent pl-1 outline-none">
                <option>{valore}</option>
            </select>
            <svg viewBox="0 0 6 3" className="pointer-events-none absolute right-1 top-3 h-[3px] w-[6px]"><path d="M0 0h6L3 3z" fill="#000" /></svg>
        </div>
    );
}

function FinestraEmail() {
    const barra = 'flex items-center bg-linear-to-b from-[#fdfdfd] to-[#f2f2f2]';
    const allegato = `flex h-[31px] items-center gap-1 text-[12px] ${BOTTONE}`;

    return (
        <div role="dialog" aria-label="Invia email" className="absolute left-[453px] top-[220px] flex w-[1012px] flex-col border border-[#555] bg-[#f0f0f0] font-['Noto_Sans',sans-serif] shadow-[2px_4px_14px_rgba(0,0,0,0.45)]">
            <div className="flex h-[30px] items-center bg-white pl-[9px]">
                <IconaLogo className="w-[14px] h-4" />
                <span className="ml-[6px] flex-1 text-[11px]">Invia email</span>
                <button aria-label="Riduci a icona" className="flex w-[45px] justify-center"><svg viewBox="0 0 10 10" className="h-[10px] w-[10px]"><path d="M0 5.5h10" stroke="#000" /></svg></button>
                <button aria-label="Ingrandisci" className="flex w-[45px] justify-center"><svg viewBox="0 0 10 10" className="h-[10px] w-[10px]"><path d="M.5.5h9v9h-9z" stroke="#000" fill="none" /></svg></button>
                <button aria-label="Chiudi" className="flex w-[46px] justify-center"><svg viewBox="0 0 10 10" className="h-[10px] w-[10px]"><path d="M0 0l10 10M10 0L0 10" stroke="#000" /></svg></button>
            </div>
            <div className="flex h-[27px] items-center bg-linear-to-r from-[#f0f0f0] to-[#fdfdfd] pl-4">
                <button className="text-[13px]">Opzioni</button>
            </div>

            <div className="mt-[2px] flex gap-3 pl-3 pr-[11px]">
                <div className="flex flex-1 flex-col gap-[5px]">
                    <Gruppo titolo="Mittente" className="h-[51px]" titoloClass="text-[12px]">
                        <div className="pt-[2px]"><RigaIndirizzo id="da" label="Da" menu={false} oscurato="w-[149px] border-t-4 border-l-4 border-b-2" /></div>
                    </Gruppo>
                    <Gruppo titolo="Destinatari" className="h-[111px]" titoloClass="text-[12px]">
                        <div className="flex flex-col gap-[7px] pt-[2px]">
                            <RigaIndirizzo id="a" label="A" oscurato="w-[136px] border-t-2 border-l-2" />
                            <RigaIndirizzo id="cc" label="Cc" />
                            <RigaIndirizzo id="ccn" label="Ccn" />
                        </div>
                    </Gruppo>
                </div>
                <Gruppo titolo="Allegati" className="w-[352px]" titoloClass="text-[12px]">
                    <div className="mt-[2px] mr-[11px] ml-2 h-[99px] border-2 border-t-[#777] border-l-[#777] border-r-white border-b-white bg-[#ababab]">
                        <div className="flex h-[28px] items-center border-b border-[#666] bg-white pl-[5px] text-[13px]">FI0002_25_03_2024.pdf</div>
                    </div>
                    <div className="mt-[9px] flex gap-[7px] pl-[39px]">
                        <button className={`${allegato} w-[86px] pl-1`}><IconaGraffetta />Visualizza</button>
                        <button className={`${allegato} w-[84px] pl-1`}><IconaPiu />Aggiungi</button>
                        <button className={`${allegato} w-[84px] pl-[7px]`}><IconaX className="mt-1 w-4 h-4" colore="#d8431a" bordo="#a52c0c" />Rimuovi</button>
                    </div>
                </Gruppo>
            </div>

            <Gruppo titolo="Messaggio" className="mt-[9px] mr-[11px] ml-3" titoloClass="text-[12px]">
                <div className="flex items-center pt-[10px] pr-3">
                    <label htmlFor="oggetto" className="ml-[14px] w-[63px] text-[12px]">Oggetto</label>
                    <input id="oggetto" defaultValue="Fattura 0002 del 25/03/2024" className="h-[25px] flex-1 border border-[#7a7a7a] bg-white px-[2px] text-[12px] outline-none" />
                </div>
                <div className="mt-[7px] mr-3 ml-[13px]">
                    <div className={`h-[28px] ${barra}`}>
                        <Maniglia />
                        <SceltaBarra nome="Carattere" valore="Arial" className="w-[181px] font-['Liberation_Sans',sans-serif] text-[14px]" />
                        <SceltaBarra nome="Dimensione" valore="11pt" className="ml-[2px] mr-[5px] w-[74px] text-[12px]" />
                        <Icone voci={ICONE_TESTO} passo="w-[23px]" />
                    </div>
                    <div className={`h-[29px] ${barra}`}>
                        <Maniglia />
                        <Icone voci={ICONE_INSERISCI} passo="w-[23px]" />
                        <Separatore className="ml-[5px]" />
                        <Icone voci={ICONE_ELENCHI} passo="w-[25px]" />
                        <Separatore className="ml-[3px]" />
                        <Icone voci={ICONE_PARAGRAFO} passo="w-[26px]" />
                        <Separatore className="ml-[7px]" />
                        <Icone voci={ICONE_CARATTERE} passo="w-[26px]" />
                    </div>
                    <div className="flex h-[245px] bg-white">
                        <textarea aria-label="Messaggio" defaultValue={'Buongiorno,\nCome da oggetto le allego la fattura'}
                            className="flex-1 resize-none bg-transparent pt-[17px] pl-[10px] font-['Liberation_Sans',sans-serif] text-[14px] leading-[17px] outline-none"
                        />
                        <div className="flex w-[18px] flex-col items-center justify-between pt-4 pb-4">
                            <Freccia su className="w-3 h-3 text-[#aaa]" spessore={1.8} />
                            <Freccia className="w-3 h-3 text-[#aaa]" spessore={1.8} />
                        </div>
                    </div>
                    <div className={`h-6 ${barra}`}>
                        <Maniglia />
                        <button aria-label="Vista progettazione" className="flex h-[22px] w-[23px] items-center justify-center border border-[#0078d7] bg-white">
                            <SvgBarra>{righe('M7 3h7M7 5.500h7M2 8h12M2 10.500h12M2 13h12', '#222')}<path d="M1.500 6.500 3.500 2l2 4.500M2.300 5h2.400" stroke="#222" fill="none" /></SvgBarra>
                        </button>
                        <button aria-label="Vista codice" className="flex w-[22px] justify-center">
                            <SvgBarra><path d="M6 2L4 4v2L2 8l2 2v2l2 2M10 2l2 2v2l2 2-2 2v2l-2 2" stroke="#5da130" strokeWidth="1.7" fill="none" /></SvgBarra>
                        </button>
                        <button aria-label="Anteprima" className="flex w-6 justify-center">
                            <SvgBarra><path d="M2 1h10l3 3v11H2z" fill="#cfe5fa" stroke="#3c82c8" /><circle cx="6" cy="9" r="5" fill="#3f8fd0" stroke="#4c9634" /><path d="M3 8q3-4 5-1l-1 4H4z" fill="#62b24a" /></SvgBarra>
                        </button>
                        <Separatore className="mx-[2px]" />
                        <button className="flex h-[22px] w-12 items-center justify-center gap-1 border border-[#0078d7] bg-white text-[12px] text-[#1a7a7a]">
                            body
                            <svg viewBox="0 0 7 10" className="h-[10px] w-[7px]"><path d="M1 1l4 4-4 4" stroke="#222" strokeWidth="2.4" fill="none" /></svg>
                        </button>
                    </div>
                </div>
                <div className="h-[13px]" />
            </Gruppo>

            <div className="mt-3 mb-[13px] flex justify-between pr-[11px] pl-3 text-[12px]">
                <button className="h-[31px] w-[81px] bg-[#c3ced3]">Invia</button>
                <button className={`h-[31px] w-[81px] ${BOTTONE}`}>Esci</button>
            </div>
            <svg viewBox="0 0 9 9" className="absolute right-px bottom-px h-[9px] w-[9px]"><path d="M7 1h2v2H7zM7 4h2v2H7zM4 4h2v2H4zM7 7h2v2H7zM4 7h2v2H4zM1 7h2v2H1z" fill="#b8b8b8" /></svg>
        </div>
    );
}

/* ---------- pagina ---------- */

const MENU = [
    { testo: 'Stampa', icona: <IconaStampante /> },
    { testo: 'Trasforma', icona: <IconaTrasforma /> },
    { testo: 'Importa articoli', icona: <IconaCassetto /> },
    { testo: 'Esporta articoli', icona: <IconaCassetto su /> },
    { testo: 'Configura tabelle', icona: <IconaIngranaggio /> },
    { testo: 'Funzionalità aggiuntive', icona: <IconaAttrezzi /> },
    { testo: "Verifica se disponibile in un'altra sede (F9)", icona: <IconaLente /> },
];

const TOTALI = [
    { voce: 'Imponibile', valore: '€ 15,00' },
    { voce: 'IVA merce', valore: '€ 3,30' },
    { voce: 'Bolli', valore: '€ 0,00' },
];

export default function App() {
    return (
        <div className="relative flex h-screen min-h-[900px] flex-col overflow-hidden bg-[#f8f9ff] font-['Noto_Sans',sans-serif] text-black">
            <header className="flex h-3 shrink-0 items-end bg-white pb-1 pl-[9px] text-[11px] leading-none text-[#999]">
                <IconaLogo className="h-3 w-3" />
                <span className="ml-[3px] flex-1">Emissione fattura immediata - Non è stata ancora pagata nessuna rata</span>
                <svg viewBox="0 0 10 10" className="mr-[66px] h-[10px] w-[10px]"><path d="M.5 2.500h7v7h-7zM2.500 2.500v-2h7v7h-2" stroke="#999" fill="none" /></svg>
            </header>
            <nav className="flex h-[27px] shrink-0 items-center gap-[17px] bg-linear-to-r from-[#f0f0f0] to-[#fdfdfd] pl-[11px] text-[13px]">
                {MENU.map((m) => (
                    <button key={m.testo} className="flex items-center gap-[3px] whitespace-nowrap">{m.icona}{m.testo}</button>
                ))}
            </nav>

            <main className="mx-[2px] mt-1 flex min-h-0 flex-1 border border-[#6b6b70]">
                <PannelloCliente />
                <section className="flex min-w-0 flex-1 flex-col">
                    <BarraArticoli />
                    <div className="h-[6px] shrink-0 bg-[#f0f0f0]" />
                    <div className="mr-[2px] mb-[2px] min-h-0 flex-1 border-t-2 border-l-2 border-t-[#777] border-l-[#777] bg-[#ababab]">
                        <TabellaArticoli />
                    </div>
                </section>
            </main>

            <footer className="flex h-[143px] shrink-0 items-end justify-between pr-[7px] pb-[3px] pl-[9px] text-[11px]">
                <div className="flex flex-1 pl-px">
                    <button className="h-[33px] w-[92px] bg-[#d3d3d3]">Modifica</button>
                </div>
                <div className="h-[135px] w-[255px] bg-[#98fb98] pt-[3px] pr-[7px] text-[14px]">
                    {TOTALI.map((t) => (
                        <div key={t.voce} className="flex h-[26px] items-center text-right">
                            <span className="w-[120px]">{t.voce}</span>
                            <span className="flex-1 text-[15px]">{t.valore}</span>
                        </div>
                    ))}
                    <div className="flex h-[26px] items-center text-right text-[15px]">
                        <span className="w-[120px]">Totale merce</span>
                        <b className="flex-1 text-[17px]">€ 18,30</b>
                    </div>
                </div>
                <div className="flex flex-1 flex-col items-end gap-[59px]">
                    <button aria-label="Aiuto" className="mr-2"><IconaAiuto /></button>
                    <button className={`h-[33px] w-[99px] ${BOTTONE}`}>Indietro</button>
                </div>
            </footer>

            <FinestraEmail />
        </div>
    );
}
